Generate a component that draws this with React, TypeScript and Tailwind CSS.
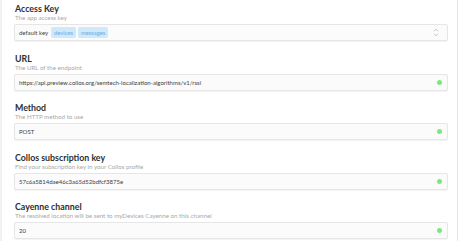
import React from "react";

type Field = {
  title: string;
  hint: string;
  value?: string;
  select?: boolean;
};

const fields: Field[] = [
  { title: "Access Key", hint: "The app access key", select: true },
  {
    title: "URL",
    hint: "The URL of the endpoint",
    value: "https://api.preview.collos.org/semtech-localization-algorithms/v1/rssi",
  },
  { title: "Method", hint: "The HTTP method to use", value: "POST" },
  {
    title: "Collos subscription key",
    hint: "Find your subscription key in your Collos profile",
    value: "57c6a5814dae46c3a65d52bdfcf3875e",
  },
  {
    title: "Cayenne channel",
    hint: "The resolved location will be sent to myDevices Cayenne on this channel",
    value: "20",
  },
];

function Spinner() {
  return (
    <svg width="6" height="9" viewBox="0 0 6 9" className="mr-[3px]">
      <path d="M1 3.2 L3 1.2 L5 3.2" fill="none" stroke="#b5b5b5" strokeWidth="0.8" />
      <path d="M1 5.8 L3 7.8 L5 5.8" fill="none" stroke="#b5b5b5" strokeWidth="0.8" />
    </svg>
  );
}

function Chip({ label }: { label: string }) {
  return (
    <span className="ml-[2px] rounded-[2px] bg-[#cfe8fa] px-[3px] py-[2.5px] text-[5.8px] leading-[6px] text-[#6aaee6]">
      {label}
    </span>
  );
}

export default function App() {
  return (
    <div
      className="h-[241px] w-[460px] overflow-hidden bg-white"
      style={{ fontFamily: "Lato, 'Open Sans', sans-serif" }}
    >
      <div className="flex h-full w-[458px] flex-col gap-[12.5px] border-l-2 border-r border-l-[#f1f1f1] border-r-[#e4e4e4] pl-[12px] pr-[9px] pt-[4px]">
        {fields.map((f) => (
          <div key={f.title} className="flex flex-col">
            <div className="pl-[1px] text-[8.8px] font-bold leading-[10px] text-[#2e2e2e]">
              {f.title}
            </div>
            <div className="pl-[1px] text-[6.2px] leading-[8px] text-[#a8a8a8]">
              {f.hint}
            </div>
            <div className="mt-[2px] flex h-[17px] items-center rounded-[2px] border border-[#e6e6e6] bg-[#fbfbfb] pl-[4px] pr-[5px] shadow-[0_1px_1px_rgba(0,0,0,0.05)]">
              {f.select ? (
                <>
                  <span className="text-[6px] text-[#3d3d3d]">default key</span>
                  <span className="ml-[1px] flex items-center">
                    <Chip label="devices" />
                    <Chip label="messages" />
                  </span>
                  <span className="flex-1" />
                  <Spinner />
                </>
              ) : (
                <>
                  <span className="flex-1 text-[6px] text-[#3d3d3d]">{f.value}</span>
                  <span className="h-[5px] w-[5px] rounded-full bg-[#7be87b]" />
                </>
              )}
            </div>
          </div>
        ))}
      </div>
    </div>
  );
}
